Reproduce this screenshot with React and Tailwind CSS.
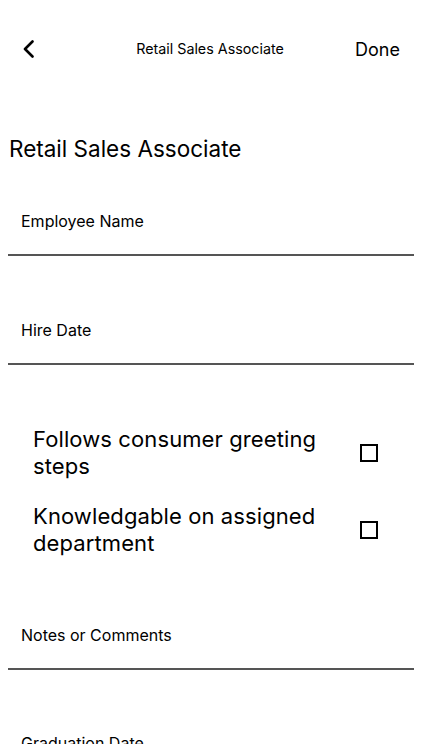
export default function App() {
  const checks = [
    "Follows consumer greeting steps",
    "Knowledgable on assigned department",
  ];

  return (
    <div className="w-[422px] h-[750px] bg-white text-black overflow-hidden" style={{ fontFamily: "Inter, 'Noto Sans', sans-serif" }}>
      <div className="h-[744px] overflow-hidden">
        {/* Nav bar */}
        <div className="h-[98px] pt-[30px] flex items-start">
          <div className="flex items-center w-full h-[38px] pl-[22px] pr-[23px]">
            <button className="w-[40px] flex items-center">
              <svg width="13" height="18" viewBox="0 0 13 18" fill="none">
                <path d="M10.5 1.5 L3 9 L10.5 16.5" stroke="#000" strokeWidth="2.6" strokeLinecap="round" strokeLinejoin="round" />
              </svg>
            </button>
            <div className="flex-1 text-center text-[14.3px] pl-[3px]">Retail Sales Associate</div>
            <button className="w-[44px] text-right text-[18px]">Done</button>
          </div>
        </div>

        {/* Form title */}
        <h1 className="px-[9px] pt-[38px] text-[22.5px] leading-[26px]">Retail Sales Associate</h1>

        <div className="mx-[8px] pt-[49px] pb-[23px] px-[13px] border-b-2 border-[#555] text-[16px] leading-[20px]">
          Employee Name
        </div>
        <div className="mx-[8px] pt-[64px] pb-[23px] px-[13px] border-b-2 border-[#555] text-[16px] leading-[20px]">
          Hire Date
        </div>

        {/* Checklist */}
        <div className="pt-[61px] pl-[33px] pr-[44px] flex flex-col gap-[23px]">
          {checks.map((c) => (
            <div key={c} className="flex items-center justify-between">
              <div className="w-[300px] text-[22px] leading-[27px] tracking-[0.1px]">{c}</div>
              <div className="w-[18px] h-[18px] border-2 border-black" />
            </div>
          ))}
        </div>

        <div className="mx-[8px] mt-[68px] pb-[23px] px-[13px] border-b-2 border-[#555] text-[16px] leading-[20px]">
          Notes or Comments
        </div>

        <div className="mx-[8px] pt-[63px] px-[13px] text-[16px] leading-[20px]">Graduation Date</div>
      </div>
    </div>
  );
}
